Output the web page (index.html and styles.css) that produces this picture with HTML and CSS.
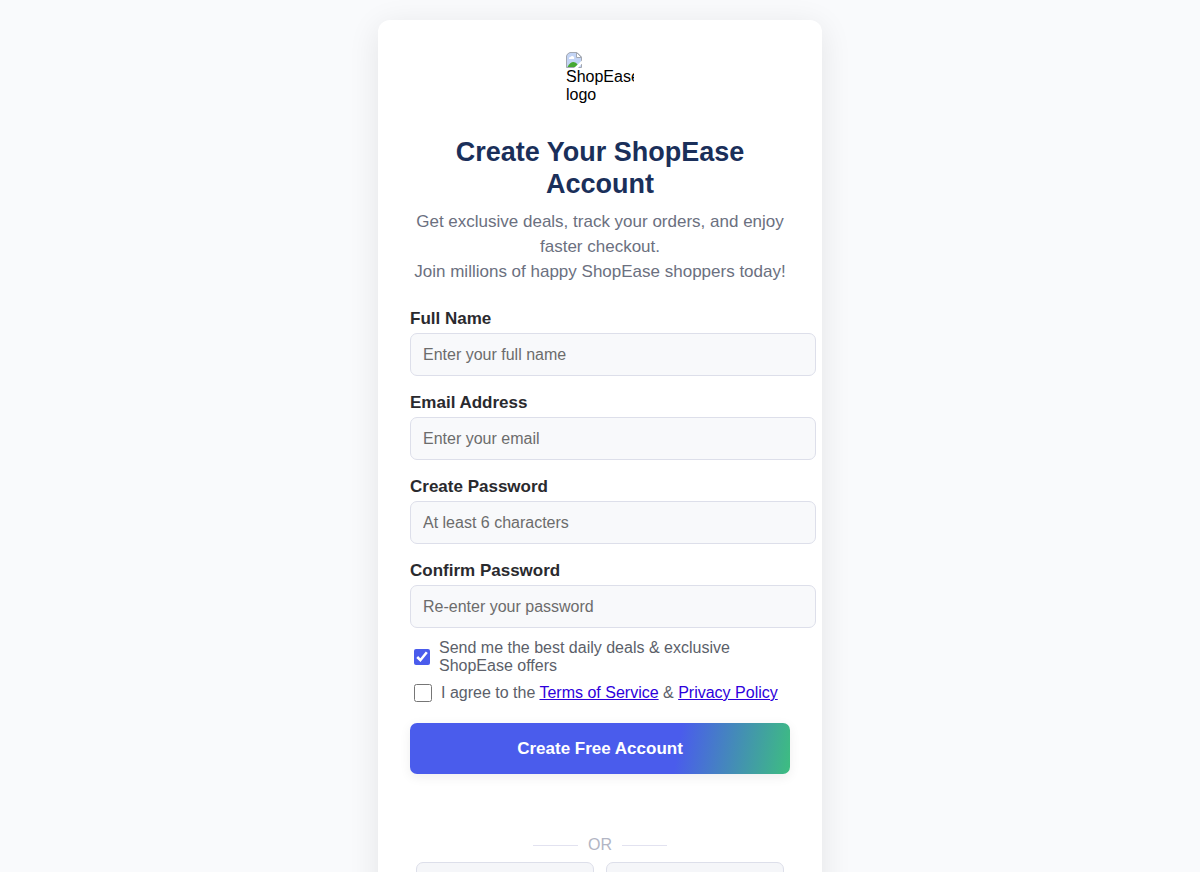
FILE: index.html
```html
<!DOCTYPE html>
<html lang="en">
<head>
<meta charset="utf-8">
<meta name="viewport" content="width=device-width, initial-scale=1">
<title>Create Your ShopEase Account</title>
<link rel="stylesheet" href="styles.css">
</head>
<body>
<main class="card">
  <div class="logo">
    <svg class="logo-icon" viewBox="0 0 16 16" width="16" height="16" aria-hidden="true">
      <path d="M4 0.5H11L15.5 5V15.5H0.5V4Q1 1.5 4 0.5Z" fill="#c3d4f5" stroke="#a3a8b2"/>
      <path d="M3 7a1.5 1.5 0 0 1 1.5-2 2 2 0 0 1 3.5 2Z" fill="#fff"/>
      <path d="M1.5 15Q4 10 7.500 10Q10 10 12 13V15Z" fill="#46a832"/>
      <path d="M10.500 0.500V5.500H15.500Z" fill="#fff" stroke="#a3a8b2"/>
      <path d="M8 16L16 8.500V11.500L12 16Z" fill="#fff"/>
    </svg>
    <span>ShopEase logo</span>
  </div>
  <h1 class="title">Create Your ShopEase Account</h1>
  <p class="subtitle">Get exclusive deals, track your orders, and enjoy faster checkout.<br>Join millions of happy ShopEase shoppers today!</p>
  <form class="form">
    <div class="field">
      <label for="name">Full Name</label>
      <input id="name" type="text" placeholder="Enter your full name">
    </div>
    <div class="field">
      <label for="email">Email Address</label>
      <input id="email" type="email" placeholder="Enter your email">
    </div>
    <div class="field">
      <label for="password">Create Password</label>
      <input id="password" type="password" placeholder="At least 6 characters">
    </div>
    <div class="field">
      <label for="confirm">Confirm Password</label>
      <input id="confirm" type="password" placeholder="Re-enter your password">
    </div>
    <div class="check">
      <input id="offers" class="box-small" type="checkbox" checked>
      <label for="offers">Send me the best daily deals &amp; exclusive ShopEase offers</label>
    </div>
    <div class="check">
      <input id="terms" type="checkbox">
      <label for="terms">I agree to the <a href="#terms">Terms of Service</a> &amp; <a href="#privacy">Privacy Policy</a></label>
    </div>
    <button class="submit" type="submit">Create Free Account</button>
  </form>
  <div class="divider">OR</div>
  <div class="social">
    <button type="button"></button>
    <button type="button"></button>
  </div>
</main>
</body>
</html>
```
FILE: styles.css
```css
body {
  margin: 0;
  padding: 20px;
  background: #f9fafc;
  font-family: "Liberation Sans", Arial, sans-serif;
  font-size: 16px;
}

.card {
  box-sizing: border-box;
  max-width: 444px;
  margin: 0 auto;
  padding: 32px;
  border-radius: 12px;
  background: #fff;
  box-shadow: 0 6px 32px rgba(0, 0, 0, 0.09);
}

.logo {
  width: 68px;
  height: 68px;
  margin: 0 auto 16px;
  overflow: hidden;
  line-height: 18px;
}

.logo-icon {
  display: block;
}

.title {
  margin: 0 0 9px;
  color: #1a2f5a;
  font-size: 27px;
  line-height: 32px;
  text-align: center;
}

.subtitle {
  margin: 0 0 25px;
  color: #6b7080;
  font-size: 17px;
  line-height: 25px;
  text-align: center;
}

.field {
  display: flex;
  flex-direction: column;
  margin-bottom: 17px;
}

.field label {
  margin-bottom: 4px;
  color: #2a2a2e;
  font-size: 17px;
  font-weight: bold;
  line-height: 20px;
}

.field input {
  box-sizing: border-box;
  width: calc(100% + 26px);
  height: 43px;
  padding: 11px 12px;
  border: 1px solid #dddfea;
  border-radius: 7px;
  background: #f8f9fb;
  font-family: inherit;
  font-size: 16px;
  line-height: 19px;
}

.field input::placeholder {
  color: #6c6c6c;
}

.field:nth-of-type(4) {
  margin-bottom: 11px;
}

.check {
  display: flex;
  align-items: center;
  gap: 6px;
  margin-bottom: 6px;
  color: #5c5f6a;
  line-height: 18px;
}

.check input {
  flex: none;
  width: 18px;
  height: 18px;
  accent-color: #4a5cec;
}

.check .box-small {
  width: 16px;
  height: 16px;
}

.check a {
  color: #2d00dc;
}

.submit {
  width: 100%;
  margin-top: 12px;
  padding: 15px;
  border: 0;
  border-radius: 7px;
  background: linear-gradient(100deg, #4a5cec 70%, #3dbe80);
  box-shadow: 0 3px 12px rgba(0, 0, 0, 0.07);
  color: #fff;
  font-family: inherit;
  font-size: 17px;
  font-weight: bold;
  line-height: 21px;
}

.divider {
  display: flex;
  align-items: center;
  justify-content: center;
  gap: 10px;
  margin-top: 62px;
  color: #b2b5c4;
  line-height: 18px;
}

.divider::before,
.divider::after {
  content: "";
  width: 45px;
  height: 1px;
  background: #e2e2f0;
}

.social {
  display: flex;
  gap: 12px;
  margin: 8px 6px 0;
}

.social button {
  flex: 1;
  height: 44px;
  border: 1px solid #dddfea;
  border-radius: 7px;
  background: #f5f6f9;
}
```
